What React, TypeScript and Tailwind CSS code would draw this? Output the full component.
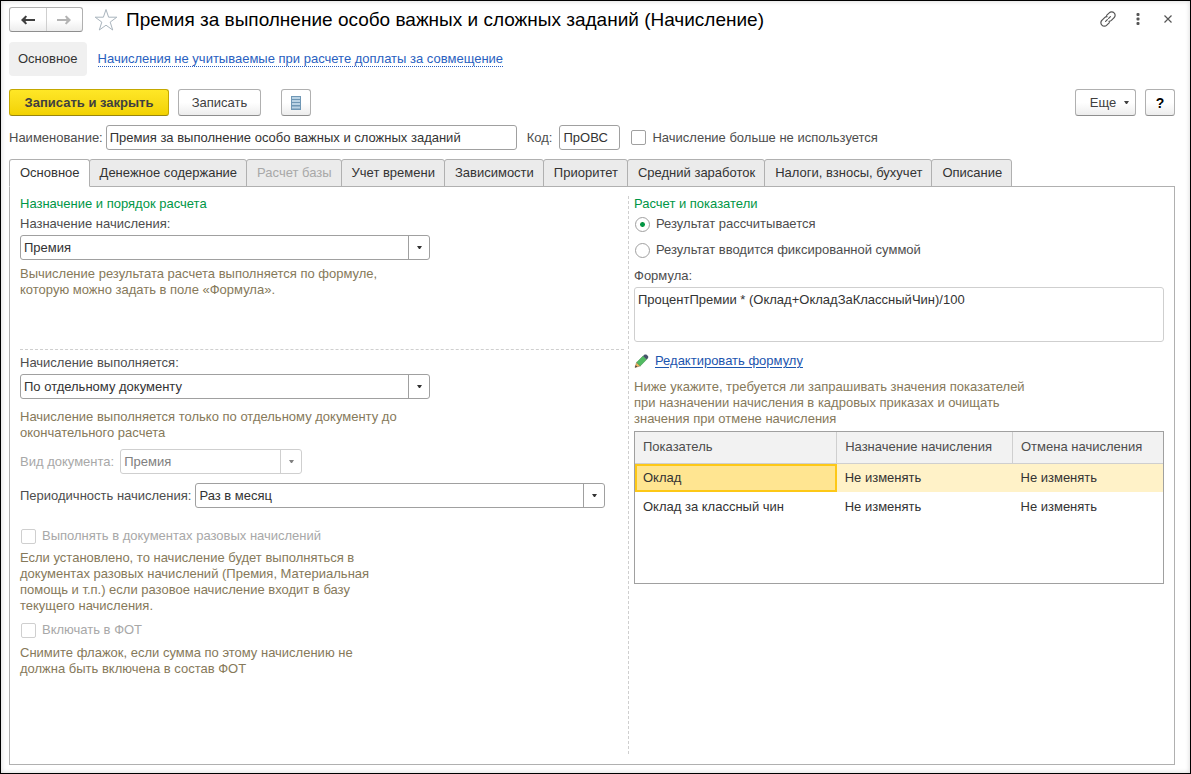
import type { ReactNode } from 'react';
import clsx from 'clsx';

const TABS = [
  { title: 'Основное', active: true },
  { title: 'Денежное содержание' },
  { title: 'Расчет базы', disabled: true },
  { title: 'Учет времени' },
  { title: 'Зависимости' },
  { title: 'Приоритет' },
  { title: 'Средний заработок' },
  { title: 'Налоги, взносы, бухучет' },
  { title: 'Описание' },
];

const INDICATORS = [
  { name: 'Оклад', assign: 'Не изменять', cancel: 'Не изменять' },
  { name: 'Оклад за классный чин', assign: 'Не изменять', cancel: 'Не изменять' },
];

const BUTTON =
  'h-[27px] shrink-0 flex items-center justify-center rounded-[3px] border border-[#b0b0b0] border-b-[#8e8e8e] bg-linear-to-b from-white from-50% to-[#ededed] text-[#404040]';

function Caret() {
  return (
    <svg width="5" height="3" viewBox="0 0 5 3" fill="currentColor" aria-hidden="true">
      <path d="M0 0h5L3 3H2z" />
    </svg>
  );
}

type SelectFieldProps = {
  id: string;
  value: string;
  className: string;
  disabled?: boolean;
};

function SelectField({ id, value, className, disabled }: SelectFieldProps) {
  return (
    <div
      className={clsx(
        'grid h-[25px] rounded-[3px] border bg-white',
        disabled ? 'border-[#cfcfcf] text-[#808080]' : 'border-[#a0a0a0] text-[#333]',
        className,
      )}
    >
      <select
        id={id}
        disabled={disabled}
        defaultValue={value}
        className="col-start-1 row-start-1 w-full appearance-none bg-transparent pl-[3px] pr-6 opacity-100 outline-none"
      >
        <option>{value}</option>
      </select>
      <span
        className={clsx(
          'pointer-events-none col-start-1 row-start-1 flex w-[21px] items-center justify-center justify-self-end border-l',
          disabled ? 'border-[#cfcfcf]' : 'border-[#a0a0a0]',
        )}
      >
        <Caret />
      </span>
    </div>
  );
}

function Hint({ children, className }: { children: ReactNode; className?: string }) {
  return <p className={clsx('text-[#86795a]', className)}>{children}</p>;
}

type CheckFieldProps = {
  label: string;
  disabled?: boolean;
  className?: string;
};

function CheckField({ label, disabled, className }: CheckFieldProps) {
  return (
    <label
      className={clsx(
        'flex items-center gap-1.5',
        disabled ? 'text-[#a8a8a8]' : 'text-[#4d4d4d]',
        className,
      )}
    >
      <input
        type="checkbox"
        disabled={disabled}
        className={clsx(
          'size-[15px] appearance-none rounded-[2px] border bg-white',
          disabled ? 'border-[#cfcfcf]' : 'border-[#a0a0a0]',
        )}
      />
      {label}
    </label>
  );
}

function RadioField({ label, checked }: { label: string; checked?: boolean }) {
  return (
    <label className="flex items-center gap-1.5">
      <input
        type="radio"
        name="result"
        defaultChecked={checked}
        className="size-[15px] appearance-none rounded-full border border-[#a0a0a0] bg-white checked:bg-radial checked:from-[#009646] checked:from-[2px] checked:to-white checked:to-[3px]"
      />
      {label}
    </label>
  );
}

function WindowHeader() {
  return (
    <header className="flex items-center">
      <div className="flex h-[25px] w-[74px] shrink-0 rounded-[3px] border border-[#b0b0b0] border-b-[#8e8e8e] bg-linear-to-b from-white from-50% to-[#ededed]">
        <button
          type="button"
          aria-label="Назад"
          className="flex flex-1 items-center justify-center border-r border-[#cfcfcf]"
        >
          <svg width="14" height="10" viewBox="0 0 14 10" fill="#404040">
            <path d="M0 5L4.6 .4 6 1.4 4.4 4H14v2H4.4L6 8.6l-1.4 1z" />
          </svg>
        </button>
        <button type="button" aria-label="Вперед" className="flex flex-1 items-center justify-center">
          <svg width="14" height="10" viewBox="0 0 14 10" fill="#b3b3b3">
            <path d="M14 5L9.4 .4 8 1.4 9.6 4H0v2h9.6L8 8.6l1.4 1z" />
          </svg>
        </button>
      </div>
      <button type="button" aria-label="В избранное" className="ml-[11px]">
        <svg width="24" height="24" viewBox="0 0 24 24" fill="#fff" stroke="#a9b4bd" strokeWidth="1">
          <path d="M12 1.5l2.6 7.7h8.2l-6.6 4.9 2.5 7.9-6.7-4.8-6.7 4.8 2.5-7.9-6.6-4.9h8.2z" />
        </svg>
      </button>
      <h1 className="ml-2 flex-1 text-[19px] leading-6 whitespace-nowrap text-black">
        Премия за выполнение особо важных и сложных заданий (Начисление)
      </h1>
      <div className="mb-0.5 flex items-center text-[#555]">
        <button type="button" aria-label="Ссылка">
          <svg
            width="16"
            height="16"
            viewBox="0 0 16 16"
            fill="none"
            stroke="currentColor"
            strokeWidth="1.2"
            strokeLinecap="round"
          >
            <path d="M6.6 4.4l2.6-2.5a3.3 3.3 0 0 1 4.9 0a3.3 3.3 0 0 1 0 4.8l-2.7 2.7a3.3 3.3 0 0 1-2.4.9" />
            <path d="M9.4 11.6l-2.6 2.5a3.3 3.3 0 0 1-4.9 0a3.3 3.3 0 0 1 0-4.8l2.7-2.7a3.3 3.3 0 0 1 2.4-.9" />
            <path d="M5.6 10.4l1.8-1.8M8.6 7.4l1.8-1.8" />
          </svg>
        </button>
        <button type="button" aria-label="Меню" className="ml-5">
          <svg width="4" height="12" viewBox="0 0 4 12" fill="currentColor">
            <rect x="0.5" y="0" width="3" height="3" rx="1" />
            <rect x="0.5" y="4.5" width="3" height="3" rx="1" />
            <rect x="0.5" y="9" width="3" height="3" rx="1" />
          </svg>
        </button>
        <button type="button" aria-label="Закрыть" className="mr-[3px] ml-6">
          <svg width="8" height="8" viewBox="0 0 8 8" fill="none" stroke="currentColor" strokeWidth="1.2">
            <path d="M.5.5l7 7M7.5.5l-7 7" />
          </svg>
        </button>
      </div>
    </header>
  );
}

function CommandBar() {
  return (
    <div className="mt-[13px] flex items-center">
      <button
        type="button"
        className="h-[27px] w-[160px] rounded-[3px] border border-[#c4a800] border-b-[#98850e] bg-linear-to-b from-[#ffe726] to-[#f2d200] font-bold text-[#404040]"
      >
        Записать и закрыть
      </button>
      <button type="button" className={clsx(BUTTON, 'ml-[9px] w-[83px]')}>
        Записать
      </button>
      <button type="button" aria-label="Список" className={clsx(BUTTON, 'ml-5 w-[30px]')}>
        <svg width="10" height="14" viewBox="0 0 10 14">
          <rect width="10" height="14" fill="#6f97b5" />
          <path d="M1 2h8M1 5h8M1 8h8M1 11.5h8" stroke="#b9d2e4" strokeWidth="2" />
        </svg>
      </button>
      <button type="button" className={clsx(BUTTON, 'ml-auto w-[61px] gap-2 pl-2')}>
        Еще
        <Caret />
      </button>
      <button type="button" className={clsx(BUTTON, 'ml-[9px] w-[30px] font-bold')}>
        <span className="text-sm text-black">?</span>
      </button>
    </div>
  );
}

function LeftColumn() {
  return (
    <div className="pr-1 pl-2.5">
      <section className="flex h-[154px] flex-col border-b border-dashed border-[#cfcfcf]">
        <h2 className="text-[#009646]">Назначение и порядок расчета</h2>
        <label htmlFor="purpose" className="mt-1">
          Назначение начисления:
        </label>
        <SelectField id="purpose" value="Премия" className="mt-[3px] w-[410px]" />
        <Hint className="mt-1.5 w-[380px]">
          Вычисление результата расчета выполняется по формуле, которую можно задать в поле
          «Формула».
        </Hint>
      </section>
      <section className="flex flex-col pt-[5px]">
        <label htmlFor="execution">Начисление выполняется:</label>
        <SelectField id="execution" value="По отдельному документу" className="mt-[3px] w-[410px]" />
        <Hint className="mt-2.5 w-[390px]">
          Начисление выполняется только по отдельному документу до окончательного расчета
        </Hint>
        <div className="mt-2 flex items-center gap-1.5">
          <label htmlFor="docKind" className="text-[#a8a8a8]">
            Вид документа:
          </label>
          <SelectField id="docKind" value="Премия" className="w-[182px]" disabled />
        </div>
        <div className="mt-[9px] mr-[19px] flex items-center gap-1">
          <label htmlFor="period">Периодичность начисления:</label>
          <SelectField id="period" value="Раз в месяц" className="flex-1" />
        </div>
        <CheckField
          label="Выполнять в документах разовых начислений"
          className="mt-5 ml-px"
          disabled
        />
        <Hint className="mt-1.5 w-[360px]">
          Если установлено, то начисление будет выполняться в документах разовых начислений
          (Премия, Материальная помощь и т.п.) если разовое начисление входит в базу текущего
          начисления.
        </Hint>
        <CheckField label="Включать в ФОТ" className="mt-2 ml-px" disabled />
        <Hint className="mt-[7px] w-[350px]">
          Снимите флажок, если сумма по этому начислению не должна быть включена в состав ФОТ
        </Hint>
      </section>
    </div>
  );
}

function IndicatorsTable() {
  return (
    <div className="mt-1 h-[153px] border border-[#a0a0a0] bg-white">
      <table className="w-full table-fixed border-collapse text-left text-[#333]">
        <colgroup>
          <col className="w-[38.2%]" />
          <col className="w-[33.3%]" />
          <col />
        </colgroup>
        <thead>
          <tr className="h-[31px] border-b border-[#cfcfcf] bg-[#f2f2f2] text-[#4d4d4d]">
            <th className="border-r border-[#cfcfcf] px-2 font-normal">Показатель</th>
            <th className="border-r border-[#cfcfcf] px-2 font-normal">Назначение начисления</th>
            <th className="px-2 font-normal">Отмена начисления</th>
          </tr>
        </thead>
        <tbody>
          {INDICATORS.map((item, index) => {
            const selected = index === 0;
            return (
              <tr key={item.name} className={clsx('h-[29px]', selected && 'bg-[#fff2c8]')}>
                <td
                  className={clsx(
                    'px-2',
                    selected && 'bg-[#ffe591] inset-ring-2 inset-ring-[#fdc817]',
                  )}
                >
                  {item.name}
                </td>
                <td className="px-2">{item.assign}</td>
                <td className="px-2">{item.cancel}</td>
              </tr>
            );
          })}
        </tbody>
      </table>
    </div>
  );
}

function RightColumn() {
  return (
    <div className="mb-2.5 flex flex-col border-l border-dashed border-[#cfcfcf] pr-2.5 pl-[5px]">
      <h2 className="text-[#009646]">Расчет и показатели</h2>
      <div className="mt-1 ml-px flex flex-col gap-2.5">
        <RadioField label="Результат рассчитывается" checked />
        <RadioField label="Результат вводится фиксированной суммой" />
      </div>
      <label htmlFor="formula" className="mt-2.5">
        Формула:
      </label>
      <textarea
        id="formula"
        readOnly
        defaultValue="ПроцентПремии * (Оклад+ОкладЗаКлассныйЧин)/100"
        className="mt-[3px] h-[55px] resize-none rounded-[3px] border border-[#cfcfcf] px-[3px] py-1 text-[#333] outline-none"
      />
      <div className="mt-[11px] flex items-center gap-1.5">
        <svg width="15" height="14" viewBox="0 0 15 14" aria-hidden="true">
          <path d="M1 13.5l1.6-5.1 3.7 3.5z" fill="#efb45f" stroke="#8a6a3a" strokeWidth=".5" />
          <path d="M1 13.5l.7-2.3 1.7 1.6z" fill="#404040" />
          <path d="M2.6 8.4L9 2l3.6 3.5-6.3 6.4z" fill="#52bb62" stroke="#3b8a49" strokeWidth=".5" />
          <path d="M9 2l1.6-1.6h1.7l1.9 1.8v1.7l-1.6 1.6z" fill="#46546a" />
        </svg>
        <a href="#formula" className="text-[#1c55ae] underline underline-offset-2">
          Редактировать формулу
        </a>
      </div>
      <Hint className="mt-2.5 w-[410px]">
        Ниже укажите, требуется ли запрашивать значения показателей при назначении начисления в
        кадровых приказах и очищать значения при отмене начисления
      </Hint>
      <IndicatorsTable />
    </div>
  );
}

export default function App() {
  return (
    <div className="flex min-h-screen flex-col border border-black bg-white pt-1.5 pr-[15px] pb-2 pl-2 font-['Liberation_Sans',Arial,sans-serif] text-[13px] leading-4 text-[#4d4d4d] inset-shadow-[0_0_5px_#d4d4d4]">
      <WindowHeader />
      <nav className="mt-2.5 flex items-center gap-[11px]">
        <a
          href="#main"
          className="flex h-[34px] items-center rounded-[4px] bg-[#f0f0f0] px-[9px] text-[#333]"
        >
          Основное
        </a>
        <a href="#excluded" className="border-b border-dotted border-[#2a5fc0] leading-[14px] text-[#2a5fc0]">
          Начисления не учитываемые при расчете доплаты за совмещение
        </a>
      </nav>
      <CommandBar />
      <div className="mt-[9px] flex items-center">
        <label htmlFor="name">Наименование:</label>
        <input
          id="name"
          defaultValue="Премия за выполнение особо важных и сложных заданий"
          className="ml-[3px] h-[25px] w-[411px] rounded-[3px] border border-[#a0a0a0] px-[3px] text-[#333] outline-none"
        />
        <label htmlFor="code" className="ml-2.5">
          Код:
        </label>
        <input
          id="code"
          defaultValue="ПрОВС"
          className="ml-[7px] h-[25px] w-[61px] rounded-[3px] border border-[#a0a0a0] px-[3px] text-[#333] outline-none"
        />
        <CheckField label="Начисление больше не используется" className="ml-[11px]" />
      </div>
      <div role="tablist" className="mt-[9px] flex">
        {TABS.map((tab) => (
          <button
            key={tab.title}
            type="button"
            role="tab"
            aria-selected={Boolean(tab.active)}
            disabled={tab.disabled}
            className={clsx(
              'h-7 rounded-t-[3px] border border-[#b0b0b0] pr-[9px] pl-2.5 whitespace-nowrap not-first:-ml-px',
              tab.active ? 'z-10 border-b-white bg-white' : 'bg-[#ebebeb]',
              tab.disabled ? 'text-[#a8a8a8]' : 'text-[#333]',
            )}
          >
            {tab.title}
          </button>
        ))}
      </div>
      <main className="-mt-px grid flex-1 grid-cols-[618fr_546fr] border border-[#b0b0b0] pt-[9px]">
        <LeftColumn />
        <RightColumn />
      </main>
    </div>
  );
}
